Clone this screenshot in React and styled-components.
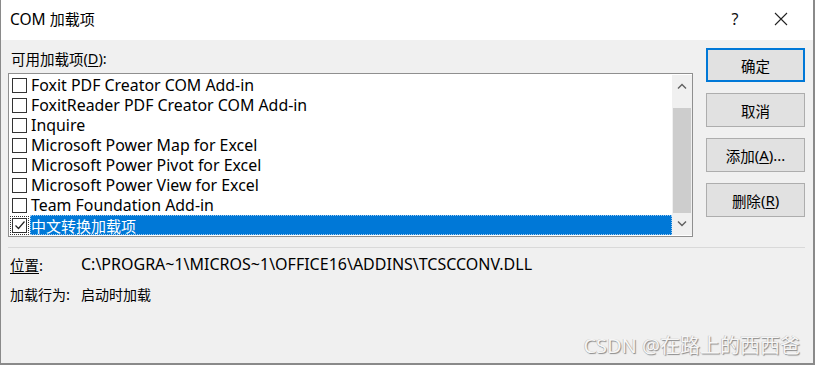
import React from "react";
import styled, { createGlobalStyle } from "styled-components";

const GlobalStyle = createGlobalStyle`
  html, body {
    margin: 0;
    padding: 0;
    background: #f0f0f0;
  }
  * {
    box-sizing: border-box;
  }
`;

const FONT = `"Noto Sans", "Noto Sans CJK SC", sans-serif`;

const Zh = styled.span`
  font-family: "Noto Sans CJK SC", sans-serif;
  font-size: ${(p) => p.$size || 14.5}px;
`;

const Window = styled.div`
  width: 815px;
  height: 365px;
  background: #f0f0f0;
  border-left: 1px solid #8a8a8a;
  border-right: 2px solid #8a8a8a;
  border-bottom: 2px solid #8a8a8a;
  font-family: ${FONT};
  font-size: 15px;
  color: #000;
  display: flex;
  flex-direction: column;
  position: relative;
  overflow: hidden;
`;

const TitleBar = styled.div`
  height: 40px;
  background: #fff;
  display: flex;
  align-items: center;
  padding-left: 9px;
`;

const Title = styled.div`
  flex: 1;
  font-size: 15.5px;
  line-height: 20px;
  margin-top: -2px;
`;

const TitleButton = styled.div`
  width: ${(p) => p.$w}px;
  display: flex;
  justify-content: center;
  align-items: center;
  font-size: 16px;
  color: #111;
  margin-top: -2px;
`;

const Body = styled.div`
  display: flex;
  padding: 0 8px 0 7px;
`;

const LeftCol = styled.div`
  width: 686px;
  display: flex;
  flex-direction: column;
`;

const Label = styled.div`
  height: 33px;
  display: flex;
  align-items: center;
  padding: 3px 0 0 3px;
  font-size: 14.5px;
`;

const U = styled.span`
  text-decoration: underline;
  text-underline-offset: 2px;
`;

const ListBox = styled.div`
  height: 164px;
  border: 1px solid #8f8f8f;
  background: #fff;
  display: flex;
  padding: 1px 0 1px 0;
`;

const Rows = styled.div`
  flex: 1;
  display: flex;
  flex-direction: column;
`;

const Row = styled.div`
  height: 20px;
  display: flex;
  align-items: center;
  padding-left: 3px;
`;

const Check = styled.div`
  width: 15px;
  height: 15px;
  border: 1px solid #333;
  background: #fff;
  display: flex;
  align-items: center;
  justify-content: center;
  flex: none;
  outline: ${(p) => (p.$focus ? "1px dotted #333" : "none")};
  outline-offset: 1px;
`;

const ItemText = styled.div`
  flex: 1;
  height: 20px;
  margin-left: 3px;
  padding-left: 1px;
  display: flex;
  align-items: center;
  font-size: 15.9px;
  white-space: nowrap;
  background: ${(p) => (p.$selected ? "#0078d7" : "transparent")};
  color: ${(p) => (p.$selected ? "#fff" : "#000")};
  outline: ${(p) => (p.$selected ? "1px dotted #9cc9ef" : "none")};
  outline-offset: -1px;
`;

const ScrollBar = styled.div`
  width: 20px;
  background: #f0f0f0;
  display: flex;
  flex-direction: column;
  align-items: center;
`;

const Arrow = styled.div`
  height: 22px;
  width: 20px;
  display: flex;
  align-items: center;
  justify-content: center;
`;

const Track = styled.div`
  flex: 1;
  width: 20px;
  display: flex;
  flex-direction: column;
  padding: 11px 1px 0 1px;
`;

const Thumb = styled.div`
  height: 105px;
  background: #cdcdcd;
`;

const RightCol = styled.div`
  width: 99px;
  margin-left: 13px;
  padding-top: 8px;
  display: flex;
  flex-direction: column;
  gap: 11px;
`;

const Button = styled.div`
  height: 34px;
  background: #e1e1e1;
  border: ${(p) => (p.$primary ? "2px solid #0078d7" : "1px solid #adadad")};
  display: flex;
  align-items: center;
  justify-content: center;
  font-size: 15px;
`;

const Separator = styled.div`
  margin: 10px 8px 0 7px;
  height: 1px;
  background: #d9d9d9;
`;

const Info = styled.div`
  display: flex;
  flex-direction: column;
  padding: 6px 0 0 9px;
  gap: 10px;
`;

const InfoRow = styled.div`
  display: flex;
  align-items: center;
  height: 20px;
  font-size: 15px;
`;

const InfoKey = styled.div`
  width: 71px;
`;

const Path = styled.div`
  font-size: 16px;
`;

const Watermark = styled.div`
  position: absolute;
  right: 13px;
  bottom: 4px;
  font-family: ${FONT};
  font-size: 20px;
  color: #f6f6f6;
  text-shadow: 1px 1px 1px #8a8a8a, -0.5px -0.5px 0 #b8b8b8;
`;

const items = [
  "Foxit PDF Creator COM Add-in",
  "FoxitReader PDF Creator COM Add-in",
  "Inquire",
  "Microsoft Power Map for Excel",
  "Microsoft Power Pivot for Excel",
  "Microsoft Power View for Excel",
  "Team Foundation Add-in",
  "中文转换加载项",
];

const CheckMark = () => (
  <svg width="12" height="12" viewBox="0 0 12 12">
    <path d="M1.5 6.5 L4.5 9.5 L10.5 2.5" fill="none" stroke="#222" strokeWidth="1.2" />
  </svg>
);

const Chevron = ({ up }) => (
  <svg width="10" height="6" viewBox="0 0 10 6">
    <path
      d={up ? "M1 5.5 L5 1.5 L9 5.5" : "M1 0.5 L5 4.5 L9 0.5"}
      fill="none"
      stroke="#606060"
      strokeWidth="1.4"
    />
  </svg>
);

export default function App() {
  return (
    <>
      <GlobalStyle />
      <Window>
        <TitleBar>
          <Title>
            COM <Zh $size={15}>加载项</Zh>
          </Title>
          <TitleButton $w={46}>?</TitleButton>
          <TitleButton $w={46} style={{ marginRight: 9 }}>
            <svg width="14" height="14" viewBox="0 0 14 14">
              <path d="M1 1 L13 13 M13 1 L1 13" stroke="#222" strokeWidth="1.1" />
            </svg>
          </TitleButton>
        </TitleBar>
        <Body>
          <LeftCol>
            <Label>
              <Zh>可用加载项</Zh>(<U>D</U>):
            </Label>
            <ListBox>
              <Rows>
                {items.map((name, i) => {
                  const selected = i === items.length - 1;
                  return (
                    <Row key={name}>
                      <Check $focus={selected}>{selected && <CheckMark />}</Check>
                      <ItemText $selected={selected}>
                        {selected ? <Zh $size={15}>{name}</Zh> : name}
                      </ItemText>
                    </Row>
                  );
                })}
              </Rows>
              <ScrollBar>
                <Arrow>
                  <Chevron up />
                </Arrow>
                <Track>
                  <Thumb />
                </Track>
                <Arrow>
                  <Chevron />
                </Arrow>
              </ScrollBar>
            </ListBox>
          </LeftCol>
          <RightCol>
            <Button $primary>
              <Zh>确定</Zh>
            </Button>
            <Button>
              <Zh>取消</Zh>
            </Button>
            <Button>
              <Zh>添加</Zh>(<U>A</U>)...
            </Button>
            <Button>
              <Zh>删除</Zh>(<U>R</U>)
            </Button>
          </RightCol>
        </Body>
        <Separator />
        <Info>
          <InfoRow>
            <InfoKey>
              <U>
                <Zh>位置</Zh>
              </U>
              :
            </InfoKey>
            <Path>C:\PROGRA~1\MICROS~1\OFFICE16\ADDINS\TCSCCONV.DLL</Path>
          </InfoRow>
          <InfoRow>
            <InfoKey>
              <Zh $size={14}>加载行为</Zh>:
            </InfoKey>
            <Zh $size={14}>启动时加载</Zh>
          </InfoRow>
        </Info>
        <Watermark>
          CSDN @<Zh $size={20}>在路上的西西爸</Zh>
        </Watermark>
      </Window>
    </>
  );
}
